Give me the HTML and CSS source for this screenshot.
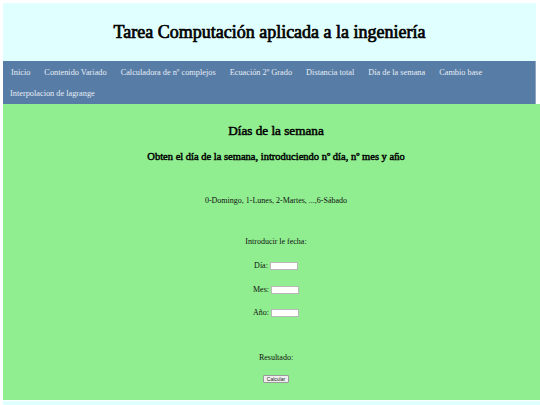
FILE: index.html
```html
<!DOCTYPE html>
<html lang="es">
<head>
<meta charset="utf-8">
<title>Días de la semana</title>
<link rel="stylesheet" href="styles.css">
</head>
<body>
<header class="site-header">
  <h1 class="site-title">Tarea Computación aplicada a la ingeniería</h1>
</header>
<nav class="site-nav">
  <a class="nav-link" href="#">Inicio</a>
  <a class="nav-link" href="#">Contenido Variado</a>
  <a class="nav-link" href="#">Calculadora de nº complejos</a>
  <a class="nav-link" href="#">Ecuación 2º Grado</a>
  <a class="nav-link" href="#">Distancia total</a>
  <a class="nav-link" href="#">Día de la semana</a>
  <a class="nav-link" href="#">Cambio base</a>
  <a class="nav-link" href="#">Interpolacion de lagrange</a>
</nav>
<main class="content">
  <h2 class="page-title">Días de la semana</h2>
  <h3 class="page-sub">Obten el día de la semana, introduciendo nº día, nº mes y año</h3>
  <p class="legend">0-Domingo, 1-Lunes, 2-Martes, ...,6-Sábado</p>
  <p class="intro">Introducir le fecha:</p>
  <label class="field field-first">Día: <input class="box" type="text"></label>
  <label class="field">Mes: <input class="box" type="text"></label>
  <label class="field">Año: <input class="box" type="text"></label>
  <p class="result">Resultado:</p>
  <button class="calc" type="button">Calcular</button>
</main>
<footer class="site-footer"></footer>
</body>
</html>
```
FILE: styles.css
```css
html, body {
  margin: 0;
  padding: 0;
}
body {
  background: #ffffff;
  padding: 3px 0 0 3px;
  font-family: "Liberation Serif", "Times New Roman", serif;
  color: #111;
  overflow: hidden;
  height: 402px;
}
.site-header {
  width: 533px;
  height: 58px;
  background: #e0ffff;
  display: flex;
  align-items: center;
  justify-content: center;
}
.site-title,
.page-title,
.page-sub {
  font-family: "Liberation Serif", "Times New Roman", serif;
  font-weight: normal;
  color: #000;
}
.site-title {
  margin: 0;
  font-size: 18px;
  line-height: 22px;
  -webkit-text-stroke: 0.7px #000;
}
.site-nav {
  width: 533px;
  height: 43px;
  background: #577ca5;
  display: flex;
  flex-wrap: wrap;
  align-content: flex-start;
  padding-top: 0.5px;
  box-sizing: border-box;
  border-right: 1px solid #8ea6bf;
}
.nav-link {
  display: block;
  padding: 6px 7px;
  font-size: 8.3px;
  line-height: 9.5px;
  color: #e6edf5;
  text-decoration: none;
}
.nav-link:first-child {
  padding-left: 8px;
}
.content {
  width: 546px;
  height: 296px;
  background: #90ee90;
  display: flex;
  flex-direction: column;
  align-items: center;
  box-sizing: border-box;
  padding-top: 19px;
}
.page-title {
  margin: 0;
  font-size: 13.2px;
  line-height: 16px;
  -webkit-text-stroke: 0.5px #000;
}
.page-sub {
  margin: 12px 0 0;
  font-size: 10.5px;
  line-height: 12px;
  -webkit-text-stroke: 0.45px #000;
}
.legend {
  margin: 33px 0 0;
  font-size: 8px;
  line-height: 10px;
}
.intro {
  margin: 31px 0 0;
  font-size: 8px;
  line-height: 10px;
}
.field {
  display: flex;
  align-items: center;
  gap: 2px;
  margin-top: 13.5px;
  font-size: 8px;
  line-height: 10px;
}
.field-first {
  margin-top: 14px;
}
.box {
  width: 28px;
  height: 8px;
  padding: 0;
  margin: 0;
  border: 1px solid #b8b8b8;
  background: #fff;
  box-sizing: border-box;
}
.result {
  margin: 35px 0 0;
  font-size: 8px;
  line-height: 10px;
}
.calc {
  margin-top: 12px;
  width: 26px;
  height: 8px;
  padding: 0;
  font-family: "Liberation Sans", Arial, sans-serif;
  font-size: 5px;
  line-height: 6px;
  color: #222;
  background: #efefef;
  border: 1px solid #9a9a9a;
  border-radius: 1px;
}
.site-footer {
  margin-top: 1px;
  width: 546px;
  height: 10px;
  background: #e0ffff;
}
```
